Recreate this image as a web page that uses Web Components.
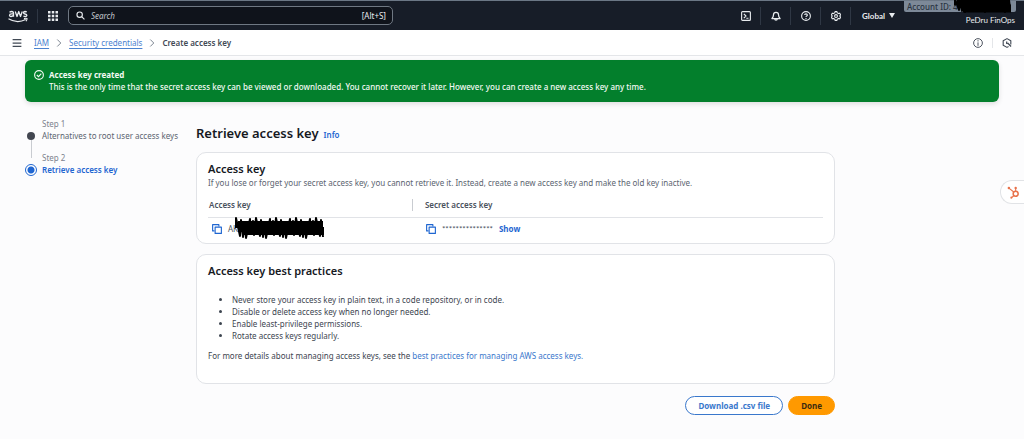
<!DOCTYPE html>
<html lang="en">
<head>
<meta charset="utf-8">
<meta name="viewport" content="width=device-width, initial-scale=1">
<title>Create access key</title>
<style>
  :root {
    --blue: #1f66d1;
    --text: #16191f;
    --muted: #5b6470;
    --line: #e1e3e7;
    --fs-body: 8px;
    --fs-h2: 11px;
    --fs-h1: 13px;
  }

  body {
    margin: 0;
    min-height: 100vh;
    background: #fcfcfd;
    color: var(--text);
    font-family: "Noto Sans", "Open Sans", sans-serif;
    font-size: var(--fs-body);
    line-height: 12px;
  }
</style>
</head>
<body>
<console-page>
  <top-nav slot="header" user="PeDru FinOps"></top-nav>
  <crumb-bar slot="header"></crumb-bar>
  <flash-banner slot="flash" heading="Access key created">This is the only time that the secret access key can be viewed or downloaded. You cannot recover it later. However, you can create a new access key any time.</flash-banner>
  <step-list slot="steps">
    <step-item label="Step 1">Alternatives to root user access keys</step-item>
    <step-item label="Step 2" current>Retrieve access key</step-item>
  </step-list>
  <page-title info="Info">Retrieve access key</page-title>
  <info-card heading="Access key">
    <span slot="description">If you lose or forget your secret access key, you cannot retrieve it. Instead, create a new access key and make the old key inactive.</span>
    <key-table></key-table>
  </info-card>
  <info-card heading="Access key best practices">
    <best-practices></best-practices>
  </info-card>
  <form-actions></form-actions>
</console-page>
<hub-tab></hub-tab>

<script>
const ICONS = {
  aws: {
    box: '0 0 40 26',
    body: `<g fill="none" stroke="currentColor" stroke-width="2.6" stroke-linejoin="round">
      <path d="M3 5.5Q5 4 7.5 4Q11 4 11 7.5V14.5M11 8.8H7Q3 9 3 11.8Q3.400 14 6 14Q9.500 14 11 11"/>
      <path d="M14.500 4L18 14L21.500 4L25 14L28.500 4"/>
      <path d="M37.500 5Q36 4 34 4Q31 4.200 31 6.500Q31 8.300 34 9Q37.800 9.800 37.800 11.800Q37.500 14 34.500 14Q32.500 14 30.800 13"/>
      <path d="M1 18.500Q18 29 35.500 20M32 18.200Q36 17 38 18Q38.500 20 36 23.500" stroke-width="2.2"/></g>`
  },
  grid: {
    box: '0 0 16 16',
    body: '<path fill="currentColor" d="M0 0h4v4H0zM6 0h4v4H6zM12 0h4v4h-4zM0 6h4v4H0zM6 6h4v4H6zM12 6h4v4h-4zM0 12h4v4H0zM6 12h4v4H6zM12 12h4v4h-4z"/>'
  },
  search: {
    box: '0 0 16 16',
    body: '<g fill="none" stroke="currentColor" stroke-width="2"><circle cx="6.500" cy="6.500" r="4.800"/><path d="M10 10l5 5"/></g>'
  },
  shell: {
    box: '0 0 16 16',
    body: '<g fill="none" stroke="currentColor" stroke-width="1.800" stroke-linejoin="round"><rect x="1" y="1" width="14" height="14" rx="1.500"/><path d="M4.500 4.500L8 8l-3.500 3.500M8.500 11.500H12"/></g>'
  },
  bell: {
    box: '0 0 16 16',
    body: '<g fill="none" stroke="currentColor" stroke-width="2" stroke-linejoin="round"><path d="M4 6a4 4 0 0 1 8 0c0 3 .8 4.500 2.500 6H1.500C3.200 10.500 4 9 4 6z"/><path d="M6 12.500a2 2.200 0 0 0 4 0"/></g>'
  },
  help: {
    box: '0 0 16 16',
    body: '<g fill="none" stroke="currentColor" stroke-width="1.800"><circle cx="8" cy="8" r="7"/><path d="M5.800 6.500Q6 4.500 8 4.500T10.200 6.300Q10.200 7.400 9 8Q8 8.500 8 9.700M8 11v1.800"/></g>'
  },
  gear: {
    box: '0 0 16 16',
    body: '<g fill="none" stroke="currentColor" stroke-width="1.800" stroke-linejoin="round"><path d="M6.500 1h3l.5 2 2 1.100 2-.6 1.300 2.600L14 8l1.300 1.900L14 12.500l-2-.6-2 1.100-.5 2h-3L6 13l-2-1.100-2 .6L.7 9.900 2 8 .7 6.100 2 3.500l2 .6L6 3z"/><circle cx="8" cy="8" r="2.300"/></g>'
  },
  menu: {
    box: '0 0 16 16',
    body: '<path fill="none" stroke="currentColor" stroke-width="2" d="M1 2.500h14M1 8h14M1 13.500h14"/>'
  },
  chevron: {
    box: '0 0 16 16',
    body: '<path fill="none" stroke="currentColor" stroke-width="2" d="M4.500 1l7 7-7 7"/>'
  },
  info: {
    box: '0 0 16 16',
    body: '<g fill="none" stroke="currentColor" stroke-width="1.500"><circle cx="8" cy="8" r="7"/><path d="M8 3.500v2M8 7v5.500"/></g>'
  },
  hexagon: {
    box: '0 0 16 16',
    body: '<g fill="none" stroke="currentColor" stroke-width="1.800" stroke-linejoin="round"><path d="M10.500 13.600L8 15 1.900 11.500v-7L8 1l6.100 3.500v6"/><path d="M7.500 5.500v3.300l3 .4M9 8l5.500 5.500" stroke-width="2"/></g>'
  },
  check: {
    box: '0 0 16 16',
    body: '<g fill="none" stroke="currentColor" stroke-width="1.800"><circle cx="8" cy="8" r="7"/><path d="M4.500 8l2.700 2.700 4.500-4.800"/></g>'
  },
  copy: {
    box: '0 0 16 16',
    body: '<g fill="none" stroke="currentColor" stroke-width="1.800" stroke-linejoin="round"><path d="M4 11H1V1h10v3"/><rect x="5" y="5" width="10" height="10"/></g>'
  },
  sprocket: {
    box: '0 0 24 24',
    body: '<g fill="none" stroke="currentColor"><circle cx="16" cy="14.500" r="4.600" stroke-width="2.800"/><path d="M12.500 11L3.500 4M16 9.500V4M12.500 18l-4 3.500" stroke-width="2"/></g><g fill="currentColor"><circle cx="3.500" cy="3.800" r="2.300"/><circle cx="16" cy="3.500" r="2.200"/><circle cx="8" cy="21.500" r="1.900"/></g>'
  }
};

// Hatched marker stroke that covers a private value
function scribble(width, height) {
  let d = 'M2 ' + height / 2;
  for (let x = 2, i = 0; x < width - 3; x += 2, i++) {
    const wobble = (i * 7) % 5;
    d += ` L${x + wobble % 3} ${i % 2 ? height - 1 - wobble : 1 + (wobble * 3) % 5}`;
  }
  return `<svg viewBox="0 0 ${width} ${height}" width="${width}" height="${height}" aria-hidden="true">
    <path d="${d}" fill="none" stroke="#000" stroke-width="2" stroke-linejoin="round"/>
    <path d="M4 ${height / 2 - 3}H${width - 3}M10 ${height / 2 + 3}H${width - 2}" stroke="#000" stroke-width="8"/>
  </svg>`;
}

function define(name, html, setup) {
  const template = document.createElement('template');
  template.innerHTML = html;
  customElements.define(name, class extends HTMLElement {
    constructor() {
      super();
      this.attachShadow({mode: 'open'});
      this.shadowRoot.appendChild(template.content.cloneNode(true));
    }

    connectedCallback() {
      if (setup) setup(this, this.shadowRoot);
    }
  });
}

define('app-icon', `
  <style>
    :host { display: block; flex: none; width: 10px; height: 10px; }
    svg { display: block; width: 100%; height: 100%; }
  </style>
  <svg aria-hidden="true"></svg>
`, (host, root) => {
  const icon = ICONS[host.getAttribute('name')];
  const svg = root.querySelector('svg');
  svg.setAttribute('viewBox', icon.box);
  svg.innerHTML = icon.body;
});

define('console-page', `
  <style>
    :host { display: block; }
    .body { padding: 4px 25px 24px; }
    .columns {
      display: grid;
      grid-template-columns: 155px minmax(0, 639px);
      column-gap: 16px;
      margin-top: 16px;
    }
    main { display: flex; flex-direction: column; gap: 10px; padding-top: 6px; }
  </style>
  <slot name="header"></slot>
  <div class="body">
    <slot name="flash"></slot>
    <div class="columns">
      <slot name="steps"></slot>
      <main><slot></slot></main>
    </div>
  </div>
`);

define('top-nav', `
  <style>
    :host {
      display: flex;
      align-items: center;
      box-sizing: border-box;
      height: 30px;
      padding: 0 8px;
      border-top: 1px solid #6b7785;
      background: #171d28;
      color: #e8ebee;
    }
    button {
      display: flex;
      align-items: center;
      justify-content: center;
      border: 0;
      padding: 0;
      background: none;
      color: inherit;
      font: inherit;
    }
    .logo { display: block; color: inherit; padding: 0 9px 0 0; border-right: 1px solid #2f3744; }
    .logo app-icon { width: 20px; height: 14px; }
    .apps { width: 30px; }
    .search {
      display: flex;
      align-items: center;
      gap: 6px;
      flex: 0 1 325px;
      box-sizing: border-box;
      height: 19px;
      padding: 0 6px 0 7px;
      border: 1px solid #6f7883;
      border-radius: 5px;
      background: #0f131b;
    }
    .search app-icon { width: 9px; height: 9px; }
    input {
      flex: 1;
      min-width: 0;
      border: 0;
      padding: 0;
      outline: 0;
      background: none;
      color: inherit;
      font: inherit;
    }
    input::placeholder { color: #c3c8cf; font-style: italic; }
    .tools { display: flex; margin-left: auto; }
    .tools button { width: 30px; height: 18px; border-right: 1px solid #2f3744; }
    .tools .region { width: auto; gap: 4px; padding: 0 0 0 11px; border: 0; font-family: Lato, sans-serif; font-weight: 700; }
    .region i { border: 3px solid transparent; border-top: 5px solid; border-bottom: 0; }
    .account {
      align-self: flex-start;
      display: flex;
      flex-direction: column;
      align-items: flex-end;
      width: 121px;
    }
    .id {
      position: relative;
      box-sizing: border-box;
      width: 112px;
      height: 11px;
      margin-bottom: 2px;
      padding-left: 3px;
      border-radius: 0 0 2px 2px;
      background: #7d8998;
      color: #2a3442;
      font-weight: 500;
      line-height: 11px;
      white-space: nowrap;
    }
    .id svg { position: absolute; top: -3px; right: 3px; }
    .user { padding-right: 1px; font-family: Lato, sans-serif; }
  </style>
  <a class="logo" href="#" aria-label="AWS"><app-icon name="aws"></app-icon></a>
  <button class="apps" aria-label="Services"><app-icon name="grid"></app-icon></button>
  <label class="search">
    <app-icon name="search"></app-icon>
    <input type="text" placeholder="Search" aria-label="Search">
    <span>[Alt+S]</span>
  </label>
  <div class="tools">
    <button aria-label="CloudShell"><app-icon name="shell"></app-icon></button>
    <button aria-label="Notifications"><app-icon name="bell"></app-icon></button>
    <button aria-label="Help"><app-icon name="help"></app-icon></button>
    <button aria-label="Settings"><app-icon name="gear"></app-icon></button>
    <button class="region">Global<i></i></button>
  </div>
  <div class="account">
    <div class="id">Account ID: 4${scribble(60, 15)}</div>
    <span class="user"></span>
  </div>
`, (host, root) => {
  root.querySelector('.user').textContent = host.getAttribute('user');
});

define('crumb-bar', `
  <style>
    :host {
      display: flex;
      align-items: center;
      box-sizing: border-box;
      height: 26px;
      padding: 0 12px;
      border-bottom: 1px solid #e4e6e9;
      background: #fff;
      color: #424a55;
    }
    nav { display: flex; align-items: center; gap: 6px; padding-left: 12px; }
    nav app-icon { width: 8px; height: 8px; color: #7c8591; }
    a { color: #4b82cf; text-decoration: underline; text-underline-offset: 2px; }
    b { font-weight: 600; }
    button { display: flex; border: 0; padding: 0; background: none; color: inherit; }
    .side { display: flex; align-items: center; margin-left: auto; }
    .side button + button { margin-left: 9px; padding-left: 9px; border-left: 1px solid #e4e6e9; }
  </style>
  <button aria-label="Open navigation"><app-icon name="menu"></app-icon></button>
  <nav aria-label="Breadcrumb">
    <a href="#">IAM</a>
    <app-icon name="chevron"></app-icon>
    <a href="#">Security credentials</a>
    <app-icon name="chevron"></app-icon>
    <b>Create access key</b>
  </nav>
  <div class="side">
    <button aria-label="Info"><app-icon name="info"></app-icon></button>
    <button aria-label="Assistant"><app-icon name="hexagon"></app-icon></button>
  </div>
`);

define('flash-banner', `
  <style>
    :host {
      display: flex;
      gap: 5px;
      padding: 9px 10px 9px 9px;
      border-radius: 6px;
      background: #037f2c;
      color: #f3faf4;
      box-shadow: 0 2px 5px #0000001f;
      font-weight: 500;
    }
    app-icon { margin-top: 1px; }
    b { display: block; }
    div { min-width: 0; }
  </style>
  <app-icon name="check"></app-icon>
  <div><b></b><slot></slot></div>
`, (host, root) => {
  root.querySelector('b').textContent = host.getAttribute('heading');
});

define('step-list', `
  <style>
    :host { display: flex; flex-direction: column; gap: 10px; }
  </style>
  <slot></slot>
`);

define('step-item', `
  <style>
    :host {
      display: grid;
      grid-template-columns: 12px 1fr;
      column-gap: 5px;
      color: var(--muted);
      white-space: nowrap;
    }
    .rail { display: flex; flex-direction: column; align-items: center; }
    .dot {
      box-sizing: border-box;
      width: 8px;
      height: 8px;
      margin-top: 14px;
      border-radius: 50%;
      background: #424650;
    }
    .rail::after { content: ''; height: 18px; margin-bottom: -16px; border-left: 1px solid #c9ccd1; }
    :host([current]) .rail::after { display: none; }
    :host([current]) .dot {
      width: 12px;
      height: 12px;
      margin-top: 12px;
      border: 1px solid var(--blue);
      background: radial-gradient(circle, var(--blue) 3px, #fff 4px);
    }
    .label { color: #7c838d; }
    :host([current]) .name { color: var(--blue); font-weight: 600; }
  </style>
  <div class="rail"><span class="dot"></span></div>
  <div>
    <div class="label"></div>
    <div class="name"><slot></slot></div>
  </div>
`, (host, root) => {
  root.querySelector('.label').textContent = host.getAttribute('label');
});

define('page-title', `
  <style>
    :host { display: flex; align-items: baseline; gap: 5px; }
    h1 { margin: 0; font-size: var(--fs-h1); line-height: 18px; font-weight: 600; }
    a { color: var(--blue); font-weight: 600; text-decoration: none; }
  </style>
  <h1><slot></slot></h1>
  <a href="#"></a>
`, (host, root) => {
  root.querySelector('a').textContent = host.getAttribute('info');
});

define('info-card', `
  <style>
    :host {
      display: block;
      padding: 8px 11px 4px;
      border: 1px solid var(--line);
      border-radius: 10px;
      background: #fff;
    }
    h2 { margin: 0; font-size: var(--fs-h2); line-height: 16px; font-weight: 600; }
    slot[name] { color: var(--muted); }
  </style>
  <h2></h2>
  <slot name="description"></slot>
  <slot></slot>
`, (host, root) => {
  root.querySelector('h2').textContent = host.getAttribute('heading');
});

define('key-table', `
  <style>
    :host { display: block; margin-top: 8px; color: #4a525d; }
    table { width: 100%; border-collapse: collapse; table-layout: fixed; }
    th { height: 16px; padding: 0 0 4px 1px; border-bottom: 1px solid var(--line); text-align: left; font-size: var(--fs-body); font-weight: 600; }
    th:first-child { width: 33%; }
    th + th { padding-left: 0; }
    th + th span { display: block; padding-left: 12px; border-left: 1px solid #c9ccd1; }
    td { height: 21px; padding: 0 0 0 4px; }
    td + td { padding-left: 14px; }
    .value { display: flex; align-items: center; gap: 6px; }
    .secret { position: relative; }
    .secret svg { position: absolute; left: 6px; top: -6px; }
    .mask { font-family: Lato, sans-serif; }
    button { display: flex; border: 0; padding: 0; background: none; color: var(--blue); font: inherit; font-weight: 700; }
  </style>
  <table>
    <thead>
      <tr><th>Access key</th><th><span>Secret access key</span></th></tr>
    </thead>
    <tbody>
      <tr>
        <td><div class="value">
          <button aria-label="Copy access key"><app-icon name="copy"></app-icon></button>
          <span class="secret">AK${scribble(92, 22)}</span>
        </div></td>
        <td><div class="value">
          <button aria-label="Copy secret access key"><app-icon name="copy"></app-icon></button>
          <span class="mask">***************</span>
          <button>Show</button>
        </div></td>
      </tr>
    </tbody>
  </table>
`);

define('best-practices', `
  <style>
    :host { display: block; padding: 15px 0 17px; color: #3d4550; }
    ul { margin: 0; padding-left: 24px; }
    p { margin: 8px 0 0; }
    a { color: #3a78cc; text-decoration: none; }
  </style>
  <ul>
    <li>Never store your access key in plain text, in a code repository, or in code.</li>
    <li>Disable or delete access key when no longer needed.</li>
    <li>Enable least-privilege permissions.</li>
    <li>Rotate access keys regularly.</li>
  </ul>
  <p>For more details about managing access keys, see the <a href="#">best practices for managing AWS access keys.</a></p>
`);

define('form-actions', `
  <style>
    :host { display: flex; justify-content: flex-end; gap: 5px; padding-top: 2px; }
    button {
      height: 19px;
      padding: 0 12px;
      border: 1px solid #3a78cc;
      border-radius: 10px;
      background: #fff;
      color: #3a78cc;
      font: inherit;
      font-weight: 700;
    }
    .primary { border-color: #ff9900; background: #ff9900; color: #3b2a10; }
  </style>
  <button>Download .csv file</button>
  <button class="primary">Done</button>
`);

// Browser extension tab that floats over the right edge of the window
define('hub-tab', `
  <style>
    :host { position: absolute; top: 180px; right: 0; }
    button {
      display: flex;
      align-items: center;
      width: 24px;
      height: 24px;
      padding: 0 0 0 6px;
      border: 1px solid #e1e3e6;
      border-right: 0;
      border-radius: 12px 0 0 12px;
      background: #fff;
      color: #e8714a;
    }
    app-icon { width: 13px; height: 13px; }
  </style>
  <button aria-label="HubSpot"><app-icon name="sprocket"></app-icon></button>
`);
</script>
</body>
</html>
